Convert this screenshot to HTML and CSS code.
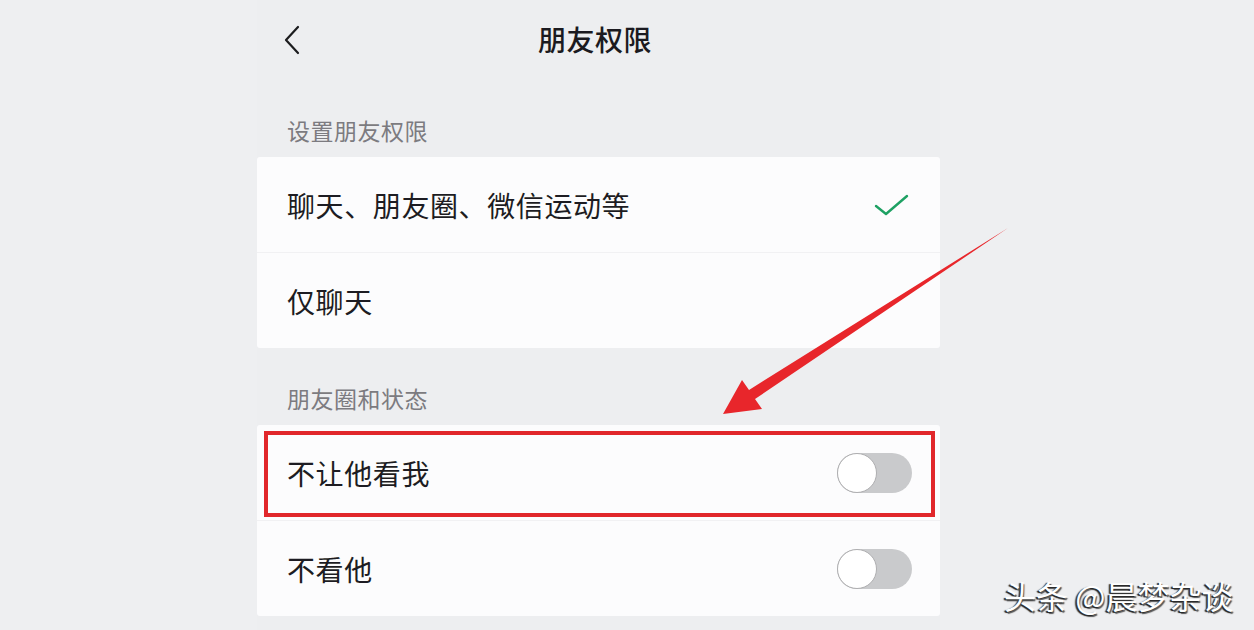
FILE: index.html
```html
<!DOCTYPE html>
<html lang="zh">
<head>
<meta charset="utf-8">
<title>朋友权限</title>
<link rel="stylesheet" href="styles.css">
</head>
<body>
<div class="page">
  <div class="phone">
    <header class="navbar">
      <svg class="back" width="18" height="30" viewBox="0 0 18 30"><path d="M15 2 L3 15 L15 28" fill="none" stroke="#1c1c1e" stroke-width="2.2" stroke-linecap="round" stroke-linejoin="round"/></svg>
      <h1 class="title">朋友权限</h1>
    </header>

    <div class="section-head">设置朋友权限</div>
    <div class="card">
      <div class="row">
        <span class="label">聊天、朋友圈、微信运动等</span>
        <svg class="check" width="36" height="24" viewBox="0 0 36 24"><path d="M2 13 L12 21 L33 3" fill="none" stroke="#1ea163" stroke-width="2.4" stroke-linecap="round" stroke-linejoin="round"/></svg>
      </div>
      <div class="divider"></div>
      <div class="row">
        <span class="label">仅聊天</span>
      </div>
    </div>

    <div class="section-head">朋友圈和状态</div>
    <div class="card">
      <div class="row highlighted">
        <span class="label">不让他看我</span>
        <span class="toggle"><span class="knob"></span></span>
        <span class="mark-box"></span>
      </div>
      <div class="divider"></div>
      <div class="row">
        <span class="label">不看他</span>
        <span class="toggle"><span class="knob"></span></span>
      </div>
    </div>
  </div>
</div>

<svg class="arrow" width="1254" height="630" viewBox="0 0 1254 630">
  <polygon points="1008,228 755,399 762,409 723,414 742,380 749,390" fill="#e8262b"/>
</svg>

<div class="watermark">头条 @晨梦杂谈</div>
</body>
</html>
```

FILE: styles.css
```css
* { box-sizing: border-box; margin: 0; padding: 0; }

html, body {
  width: 1254px;
  height: 630px;
  overflow: hidden;
}

body {
  background: #eeeff1;
  font-family: "Noto Sans CJK SC", "Noto Sans", sans-serif;
  color: #1b1b1f;
  position: relative;
}

.page {
  display: flex;
  padding-left: 257px;
}

.phone {
  width: 683px;
  display: flex;
  flex-direction: column;
  background: #edeef0;
  min-height: 630px;
}

.navbar {
  height: 80px;
  display: flex;
  align-items: center;
  justify-content: center;
  padding-right: 7px;
  position: relative;
}

.back {
  position: absolute;
  left: 26px;
  top: 25px;
}

.title {
  font-size: 28px;
  font-weight: 500;
  line-height: 34px;
  letter-spacing: 0.5px;
  color: #1b1a20;
  margin-top: -2px;
}

.section-head {
  height: 77px;
  display: flex;
  align-items: flex-end;
  padding: 0 0 15px 30px;
  font-size: 23px;
  line-height: 24px;
  letter-spacing: 0.5px;
  color: #7c7b80;
}

.card {
  background: #fcfcfd;
  border-radius: 3px;
  display: flex;
  flex-direction: column;
}

.row {
  height: 95px;
  display: flex;
  align-items: center;
  justify-content: space-between;
  padding: 0 28px 0 30px;
  position: relative;
}

.label {
  font-size: 28px;
  line-height: 34px;
  letter-spacing: 0.6px;
  color: #1d1c22;
}

.divider {
  height: 1px;
  background: #f1f1f3;
}

.check {
  margin-right: 2px;
  margin-top: 1px;
}

.toggle {
  width: 75px;
  height: 40px;
  border-radius: 20px;
  background: #c9cacc;
  position: relative;
  display: block;
}

.knob {
  position: absolute;
  left: 0;
  top: 0;
  width: 40px;
  height: 40px;
  border-radius: 50%;
  background: #ffffff;
  border: 1px solid #aeaeb0;
}

.mark-box {
  position: absolute;
  left: 7px;
  right: 5px;
  top: 6px;
  bottom: 3px;
  border: 4px solid #e1272b;
}

.arrow {
  position: absolute;
  left: 0;
  top: 0;
  pointer-events: none;
}

.watermark {
  position: absolute;
  left: 1004px;
  top: 577px;
  font-size: 32px;
  line-height: 36px;
  color: #ffffff;
  white-space: nowrap;
  text-shadow: -1px 1px 0 #2a2a2a, 1px 2px 1px #555, -2px 1px 1px #444;
}
```
